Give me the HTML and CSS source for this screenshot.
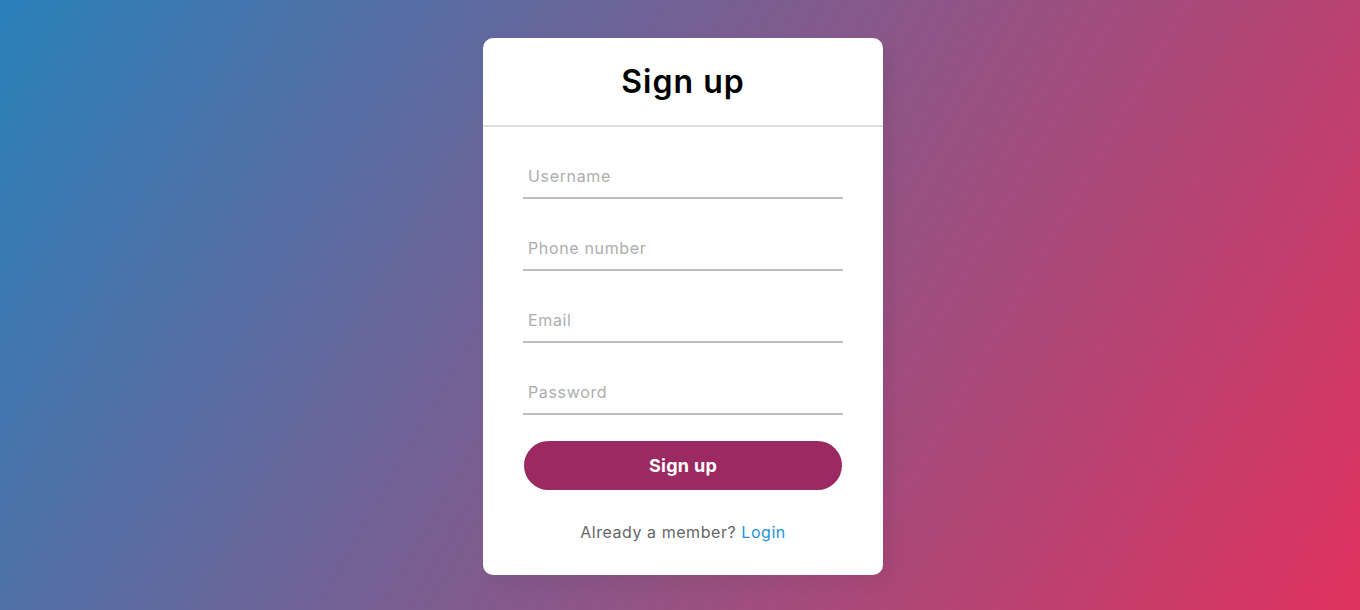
FILE: index.html
```html
<!DOCTYPE html>
<html lang="en">
<head>
<meta charset="utf-8">
<title>Sign up</title>
<link rel="stylesheet" href="styles.css">
</head>
<body>
<main class="page">
  <div class="card">
    <h1 class="title">Sign up</h1>
    <form class="form">
      <div class="field"><input type="text" placeholder="Username"></div>
      <div class="field"><input type="text" placeholder="Phone number"></div>
      <div class="field"><input type="email" placeholder="Email"></div>
      <div class="field"><input type="password" placeholder="Password"></div>
      <button type="button" class="btn">Sign up</button>
      <p class="signup-link">Already a member? <a href="#">Login</a></p>
    </form>
  </div>
</main>
</body>
</html>
```
FILE: styles.css
```css
* { box-sizing: border-box; }
html, body { margin: 0; padding: 0; }
body {
  height: 100vh;
  font-family: "Inter", "Open Sans", sans-serif;
  background: linear-gradient(120deg, #2980b9, #e0325e);
  overflow: hidden;
}
.page {
  height: 100%;
  display: flex;
  align-items: center;
  justify-content: center;
  padding: 3px 0 0 6px;
}
.card {
  width: 400px;
  background: #fff;
  border-radius: 10px;
  box-shadow: 10px 10px 15px rgba(0,0,0,0.05);
}
.title {
  margin: 0;
  text-align: center;
  font-size: 32px;
  font-weight: 600;
  line-height: 48px;
  letter-spacing: 1px;
  padding: 20px 0 19px;
  color: #000;
  border-bottom: 2px solid #dedede;
}
.form {
  padding: 30px 40px 0;
  display: flex;
  flex-direction: column;
}
.field {
  border-bottom: 2px solid #bdbdbd;
  margin-bottom: 30px;
}
.field:nth-child(4) { margin-bottom: 26px; }
.field input {
  display: block;
  width: 100%;
  height: 40px;
  padding: 0 5px 2px;
  border: none;
  outline: none;
  background: none;
  font-family: inherit;
  font-size: 16px;
  letter-spacing: 0.65px;
  color: #333;
}
.field input::placeholder { color: #adadad; }
.btn {
  height: 49px;
  margin: 0 1px;
  border: none;
  border-radius: 25px;
  background: #9b2a62;
  color: #fff;
  font-family: inherit;
  font-size: 18px;
  font-weight: 700;
  letter-spacing: 0.3px;
  cursor: pointer;
}
.signup-link {
  margin: 30px 0 31px;
  text-align: center;
  font-size: 16px;
  line-height: 24px;
  letter-spacing: 0.55px;
  color: #666;
}
.signup-link a {
  color: #2691d9;
  text-decoration: none;
}
```
